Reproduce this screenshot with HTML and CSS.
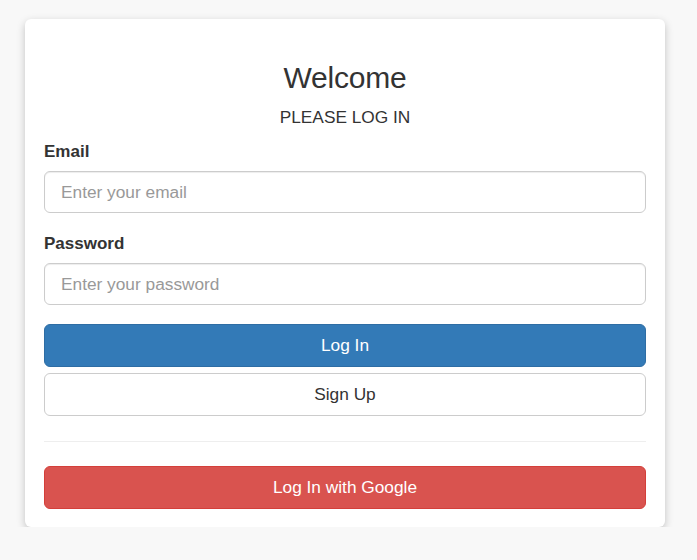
FILE: index.html
```html
<!DOCTYPE html>
<html lang="en">
<head>
<meta charset="utf-8">
<title>Welcome</title>
<link rel="stylesheet" href="styles.css">
</head>
<body>
<div class="card">
  <h3 class="title">Welcome</h3>
  <p class="subtitle">PLEASE LOG IN</p>
  <form class="form">
    <div class="form-group">
      <label class="label" for="email">Email</label>
      <input class="input" id="email" type="email" placeholder="Enter your email">
    </div>
    <div class="form-group">
      <label class="label" for="password">Password</label>
      <input class="input" id="password" type="password" placeholder="Enter your password">
    </div>
    <button type="button" class="btn btn-primary">Log In</button>
    <button type="button" class="btn btn-default">Sign Up</button>
  </form>
  <hr class="divider">
  <button type="button" class="btn btn-danger">Log In with Google</button>
</div>
</body>
</html>
```

FILE: styles.css
```css
* { box-sizing: border-box; }

html, body {
  margin: 0;
  padding: 0;
}

body {
  background: #f8f8f8;
  font-family: "Liberation Sans", Arial, sans-serif;
  color: #333;
  font-size: 17px;
}

.card {
  width: 640px;
  margin: 19px 0 0 25px;
  padding: 19px 19px 18px;
  background: #fff;
  border-radius: 6px;
  box-shadow: 0 3px 8px rgba(0, 0, 0, 0.22);
}

.title {
  margin: 23px 0 11px;
  font-size: 30px;
  line-height: 33px;
  font-weight: normal;
  text-align: center;
  letter-spacing: -0.2px;
}

.subtitle {
  margin: 0 0 11px;
  font-size: 17.3px;
  line-height: 24px;
  text-align: center;
}

.form {
  margin: 0;
}

.form-group {
  margin-bottom: 19px;
}

.label {
  display: block;
  font-size: 17px;
  line-height: 24px;
  font-weight: bold;
  margin-bottom: 7px;
}

.input {
  display: block;
  width: 100%;
  height: 42px;
  padding: 0 16px;
  font-family: inherit;
  font-size: 17.3px;
  color: #555;
  background: #fff;
  border: 1px solid #ccc;
  border-radius: 6px;
  box-shadow: inset 0 1px 1px rgba(0, 0, 0, 0.075);
  outline: none;
}

.input::placeholder {
  color: #999;
}

.btn {
  display: block;
  width: 100%;
  height: 43px;
  padding: 0 16px;
  font-family: inherit;
  font-size: 17.3px;
  border: 1px solid transparent;
  border-radius: 6px;
  cursor: pointer;
}

.btn-primary {
  color: #fff;
  background: #337ab7;
  border-color: #2e6da4;
}

.btn-default {
  margin-top: 6px;
  color: #333;
  background: #fff;
  border-color: #ccc;
}

.btn-danger {
  color: #fff;
  background: #d9534f;
  border-color: #d43f3a;
}

.divider {
  margin: 25px 0 24px;
  border: 0;
  border-top: 1px solid #eee;
}
```
